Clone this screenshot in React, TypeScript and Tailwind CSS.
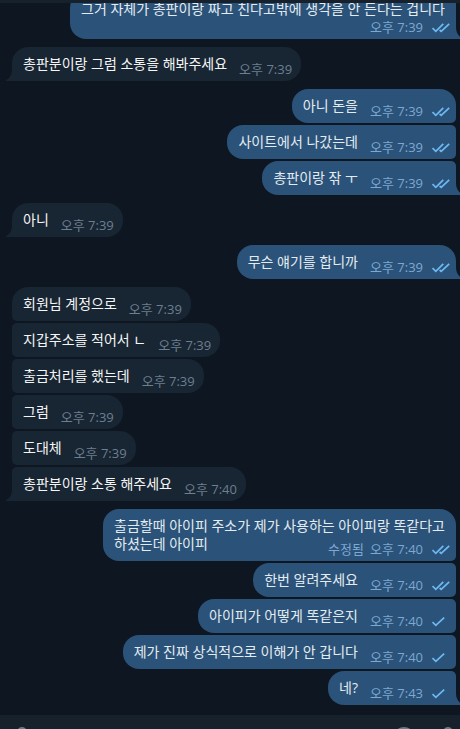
import React from "react";

type Status = "read" | "sent";

interface Message {
  text: string;
  time: string;
  edited?: boolean;
  status?: Status;
  timeBelow?: boolean;
}

interface Group {
  from: "me" | "them";
  continued?: boolean;
  messages: Message[];
}

const groups: Group[] = [
  {
    from: "me",
    continued: true,
    messages: [
      {
        text: "그거 자체가 총판이랑 짜고 친다고밖에 생각을 안 든다는 겁니다",
        time: "오후 7:39",
        status: "read",
        timeBelow: true,
      },
    ],
  },
  { from: "them", messages: [{ text: "총판분이랑 그럼 소통을 해봐주세요", time: "오후 7:39" }] },
  {
    from: "me",
    messages: [
      { text: "아니 돈을", time: "오후 7:39", status: "read" },
      { text: "사이트에서 나갔는데", time: "오후 7:39", status: "read" },
      { text: "총판이랑 잒 ㅜ", time: "오후 7:39", status: "read" },
    ],
  },
  { from: "them", messages: [{ text: "아니", time: "오후 7:39" }] },
  { from: "me", messages: [{ text: "무슨 얘기를 합니까", time: "오후 7:39", status: "read" }] },
  {
    from: "them",
    messages: [
      { text: "회원님 계정으로", time: "오후 7:39" },
      { text: "지갑주소를 적어서 ㄴ", time: "오후 7:39" },
      { text: "출금처리를 했는데", time: "오후 7:39" },
      { text: "그럼", time: "오후 7:39" },
      { text: "도대체", time: "오후 7:39" },
      { text: "총판분이랑 소통 해주세요", time: "오후 7:40" },
    ],
  },
  {
    from: "me",
    messages: [
      {
        text: "출금할때 아이피 주소가 제가 사용하는 아이피랑 똑같다고\n하셨는데 아이피",
        time: "오후 7:40",
        edited: true,
        status: "read",
      },
      { text: "한번 알려주세요", time: "오후 7:40", status: "read" },
      { text: "아이피가 어떻게 똑같은지", time: "오후 7:40", status: "sent" },
      { text: "제가 진짜 상식적으로 이해가 안 갑니다", time: "오후 7:40", status: "sent" },
      { text: "네?", time: "오후 7:43", status: "sent" },
    ],
  },
];

function Checks({ status }: { status: Status }) {
  return (
    <svg
      width="18"
      height="10"
      viewBox="0 0 18 10"
      fill="none"
      stroke="#6db9f2"
      strokeWidth="1.7"
      className="ml-[9px] mt-[2px] shrink-0"
      role="img"
      aria-label={status}
    >
      <path d={status === "read" ? "M0.5 5L3.8 8.4L11.3 0.8" : "M0.5 5L3.8 8.4L12.2 0.6"} />
      {status === "read" && <path d="M7.6 7L9.2 8.4L17.2 0.8" />}
    </svg>
  );
}

function Tail({ mine }: { mine: boolean }) {
  return (
    <svg
      width="7"
      height="12"
      viewBox="0 0 7 12"
      className={
        mine
          ? "absolute bottom-0 left-full fill-[#2b5278]"
          : "absolute bottom-0 right-full fill-[#182533]"
      }
      aria-hidden="true"
    >
      <path d={mine ? "M0 0C0 5 2 9 6 11Q7 12 5.5 12H0Z" : "M7 0C7 5 5 9 1 11Q0 12 1.5 12H7Z"} />
    </svg>
  );
}

function Bubble({
  message,
  mine,
  first,
  last,
}: {
  message: Message;
  mine: boolean;
  first: boolean;
  last: boolean;
}) {
  const side = mine
    ? `self-end rounded-l-[16px] bg-[#2b5278] text-[#e4ecf2] ${first ? "rounded-tr-[16px]" : "rounded-tr-[5px]"} ${last ? "" : "rounded-br-[5px]"}`
    : `self-start rounded-r-[16px] bg-[#182533] text-[#f5f5f5] ${first ? "rounded-tl-[16px]" : "rounded-tl-[5px]"} ${last ? "" : "rounded-bl-[5px]"}`;
  const place = message.timeBelow ? "justify-end" : "float-right mt-[5px] ml-3";
  const tone = mine ? "-mr-[5px] text-[#7da8d3]" : "-mr-[2px] text-[#6d7f8f]";

  return (
    <li className={`relative flow-root shrink-0 whitespace-pre-line px-[11px] pt-2 pb-[3px] ${side}`}>
      {message.text}
      <span className={`flex items-center text-[13px] ${place} ${tone}`}>
        {message.edited && <span className="mr-[6px]">수정됨</span>}
        <time>{message.time}</time>
        {message.status && <Checks status={message.status} />}
      </span>
      {last && <Tail mine={mine} />}
    </li>
  );
}

export default function App() {
  return (
    <div className="flex h-screen flex-col overflow-hidden bg-[#0e1621] font-['Open_Sans','Noto_Sans_CJK_KR',sans-serif] text-sm leading-[18px]">
      <header className="h-[3px] shrink-0 bg-[#17212b]" />
      <main className="flex min-h-0 flex-1 flex-col justify-end gap-2 overflow-hidden pr-1 pb-[10px] pl-3">
        {groups.map((group, g) => (
          <ul key={g} className="flex shrink-0 flex-col gap-[2px]">
            {group.messages.map((message, i) => (
              <Bubble
                key={i}
                message={message}
                mine={group.from === "me"}
                first={i === 0 && !group.continued}
                last={i === group.messages.length - 1}
              />
            ))}
          </ul>
        ))}
      </main>
      <footer className="flex h-[14px] shrink-0 items-start overflow-hidden bg-[#17212b] pt-3 pl-[2px] text-[#6c7883]">
        <button type="button" aria-label="파일 첨부" className="flex w-10 justify-center">
          <svg width="24" height="24" viewBox="0 0 24 24" fill="none" stroke="currentColor" strokeWidth="2">
            <path d="M8 7V5a4 4 0 0 1 8 0v12a6 6 0 0 1-12 0V9" />
          </svg>
        </button>
        <span className="flex-1" />
        <button type="button" aria-label="이모티콘" className="flex w-11 justify-center">
          <svg width="24" height="24" viewBox="0 0 24 24" fill="none" stroke="currentColor" strokeWidth="2">
            <circle cx="12" cy="11" r="10" />
            <path d="M7 14q5 5 10 0M8 8v1M16 8v1" />
          </svg>
        </button>
        <button type="button" aria-label="음성 메시지" className="-mr-[10px] flex w-11 justify-center">
          <svg width="24" height="24" viewBox="0 0 24 24" fill="none" stroke="currentColor" strokeWidth="2">
            <rect x="8" y="1" width="8" height="13" rx="4" />
            <path d="M4 11a8 8 0 0 0 16 0M12 19v4" />
          </svg>
        </button>
      </footer>
    </div>
  );
}
